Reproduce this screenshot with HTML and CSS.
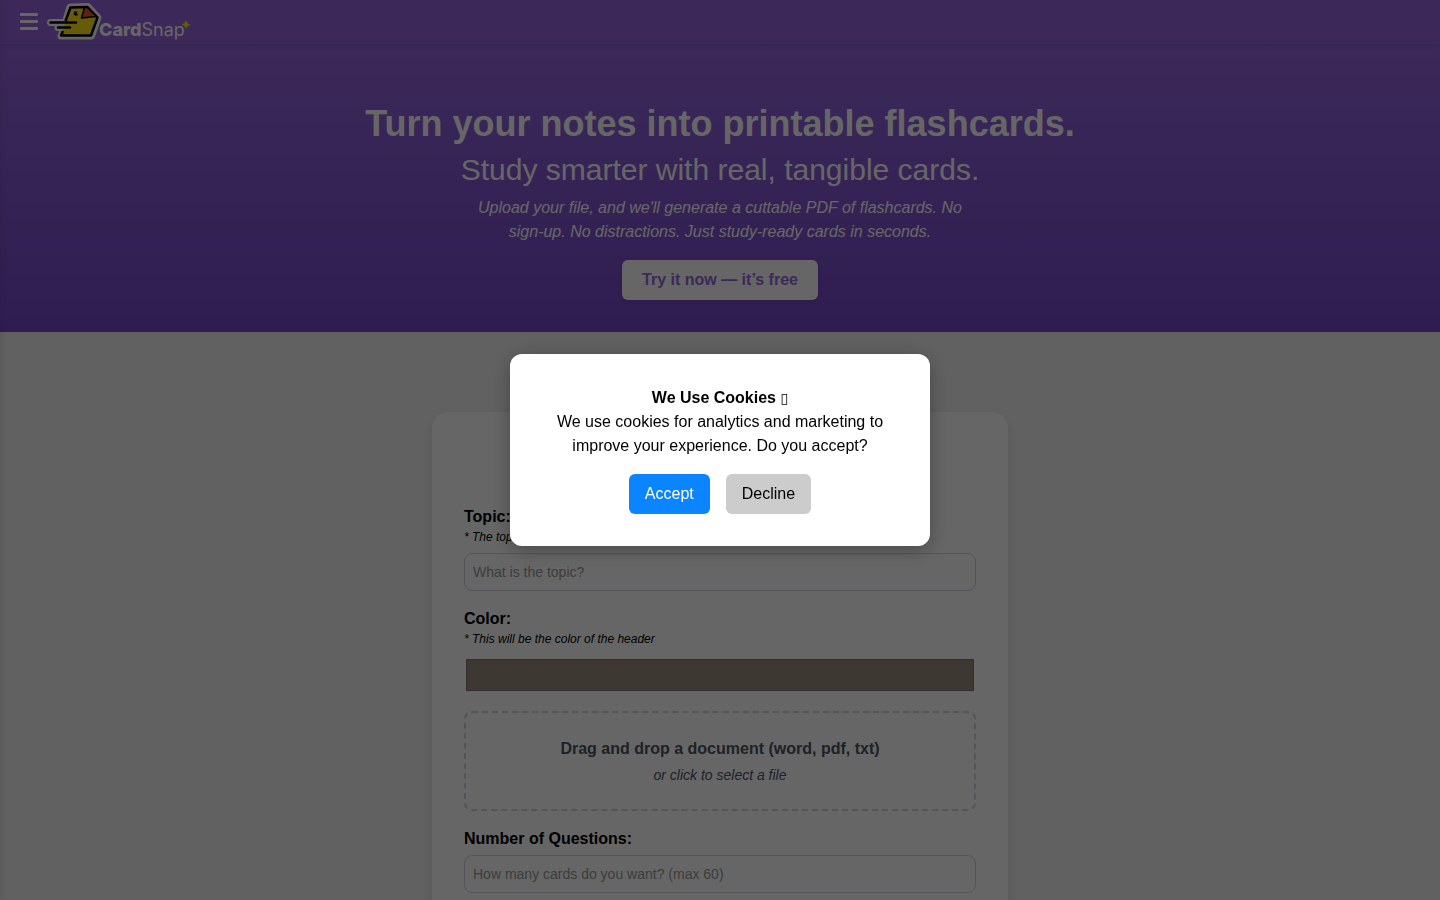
FILE: index.html
```html
<!DOCTYPE html>
<html lang="en">
<head>
	<meta charset="UTF-8">
	<meta name="viewport" content="width=device-width, initial-scale=1.0">
	<title>CardSnap</title>
	<link rel="stylesheet" href="styles.css">
</head>
<body>
	<div class="sidebar" id="sidebar"></div>

	<header class="navbar">
		<button class="menuBtn" id="menuBtn" type="button" aria-label="Menu">
			<span></span>
			<span></span>
			<span></span>
		</button>
		<a class="logo" href="#" aria-label="CardSnap">
			<svg width="150" height="42" viewBox="0 0 150 42">
				<!-- white outline -->
				<g fill="#fff" stroke="#fff" stroke-width="7" stroke-linejoin="round" stroke-linecap="round">
					<path d="M24 7 L42 6.500 L52 17.500 L45.500 36 H15 L17.500 30 L20 20 Z"/>
					<path d="M4.500 22.500 H29 M12 27.500 H22" fill="none"/>
				</g>
				<!-- bird -->
				<path d="M19.500 21 L24.500 7.500 L41.500 7 L51.500 17.500 L45 35.500 H15 L17 31" fill="#ffe414" stroke="#000" stroke-width="2.500" stroke-linejoin="round"/>
				<path d="M38.500 7.500 L35.500 18 L50.500 16.500 L41.500 7.500 Z" fill="#e8552b" stroke="#000" stroke-width="1.500" stroke-linejoin="round"/>
				<path d="M4.500 22.500 H30 M12 27.500 H24" fill="none" stroke="#000" stroke-width="2.500" stroke-linecap="round"/>
				<circle cx="30" cy="13.500" r="2.200" fill="#000"/>
				<circle cx="31.500" cy="13" r="1" fill="#ffe414"/>
				<text class="logoText" x="53" y="36"><tspan class="logoBold">Card</tspan>Snap</text>
				<path d="M140 20 Q141 23.500 144.500 24.500 Q141 25.500 140 29 Q139 25.500 135.500 24.500 Q139 23.500 140 20 Z" fill="#ffe414"/>
			</svg>
		</a>
	</header>

	<section class="hero">
		<h1>Turn your notes into printable flashcards.</h1>
		<h2>Study smarter with real, tangible cards.</h2>
		<p>Upload your file, and we'll generate a cuttable PDF of flashcards. No sign-up. No distractions. Just study-ready cards in seconds.</p>
		<a class="tryBtn" href="#cardForm">Try it now — it’s free</a>
	</section>

	<main class="content">
		<form class="card" id="cardForm">
			<div class="field">
				<label for="topic">Topic:</label>
				<small>* The topic of the flashcards</small>
				<input type="text" id="topic" placeholder="What is the topic?">
			</div>
			<div class="field">
				<label for="color">Color:</label>
				<small>* This will be the color of the header</small>
				<input type="color" id="color" value="#998c7a">
			</div>
			<label class="dropZone" for="file">
				<strong>Drag and drop a document (word, pdf, txt)</strong>
				<em>or click to select a file</em>
				<input type="file" id="file" accept=".docx,.pdf,.txt">
			</label>
			<div class="field amount">
				<label for="amount">Number of Questions:</label>
				<input type="number" id="amount" max="60" placeholder="How many cards do you want? (max 60)">
			</div>
		</form>
	</main>

	<div class="overlay" id="cookieOverlay">
		<div class="cookieBox" role="dialog" aria-labelledby="cookieTitle">
			<p id="cookieTitle"><strong>We Use Cookies</strong> <span class="cookieIcon">▯</span></p>
			<p>We use cookies for analytics and marketing to improve your experience. Do you accept?</p>
			<div class="cookieBtns">
				<button class="accept" type="button">Accept</button>
				<button class="decline" type="button">Decline</button>
			</div>
		</div>
	</div>
</body>
</html>
```
FILE: styles.css
```css
*{
	margin: 0;
	padding: 0;
	box-sizing: border-box;
}
html{
	height: 100%;
	overflow: hidden;
}
body{
	height: 100%;
	overflow: hidden;
	font-family: "Liberation Sans", Arial, sans-serif;
	font-size: 16px;
	line-height: 24px;
	color: #000;
	background-color: #f3f3f3;
}
input, button{
	font-family: inherit;
}
.sidebar{
	position: fixed;
	top: 0;
	bottom: 0;
	left: -250px;
	width: 250px;
	box-shadow: 2px 0 8px rgba(0,0,0,0.1);
	z-index: 5;
}
/* navbar */
.navbar{
	position: relative;
	display: flex;
	align-items: center;
	gap: 8px;
	padding: 0 20px 2px;
	background-color: #9667e0;
	box-shadow: 0 2px 4px rgba(0,0,0,0.1);
}
.menuBtn{
	display: flex;
	flex-direction: column;
	gap: 4px;
	width: 18px;
	border: none;
	background: none;
	cursor: pointer;
}
.menuBtn span{
	height: 3px;
	border-radius: 1px;
	background-color: #fff;
}
.logo{
	display: flex;
}
.logoText{
	font-family: Inter, sans-serif;
	font-size: 18px;
	fill: #fff;
}
.logoBold{
	font-weight: 800;
}
/* hero */
.hero{
	display: flex;
	flex-direction: column;
	align-items: center;
	padding: 56px 16px 32px;
	color: #fff;
	text-align: center;
	background: linear-gradient(#9667e0, #7649cb);
}
.hero h1{
	font-size: 36px;
	line-height: 48px;
}
.hero h2{
	font-size: 30px;
	font-weight: normal;
	line-height: 44px;
}
.hero p{
	max-width: 512px;
	margin: 4px 0 16px;
	font-style: italic;
}
.tryBtn{
	padding: 8px 20px;
	border-radius: 6px;
	color: #9667e0;
	font-weight: bold;
	text-decoration: none;
	background-color: #fff;
	box-shadow: 0 2px 4px rgba(0,0,0,0.1);
}
/* form */
.content{
	padding: 80px 16px;
}
.card{
	display: flex;
	flex-direction: column;
	gap: 16px;
	max-width: 576px;
	margin: 0 auto;
	padding: 93px 32px 32px;
	border-radius: 16px;
	background-color: #fff;
	box-shadow: 0 4px 12px rgba(0,0,0,0.1);
}
.field{
	display: flex;
	flex-direction: column;
}
.field label{
	font-weight: bold;
}
.field small{
	margin-bottom: 8px;
	font-size: 12px;
	font-style: italic;
	line-height: 16px;
}
.field input{
	width: 100%;
	height: 38px;
	padding: 0 8px;
	border: 1px solid #d1d5db;
	border-radius: 8px;
	font-size: 14px;
	background-color: #fff;
}
.field input::placeholder{
	color: #999;
}
.field input[type="color"]{
	height: 40px;
	padding: 0;
	border: none;
	background: none;
}
.amount{
	gap: 4px;
}
.dropZone{
	display: flex;
	flex-direction: column;
	gap: 4px;
	padding: 24px;
	border: 2px dashed #d1d5db;
	border-radius: 8px;
	color: #4b5563;
	text-align: center;
	cursor: pointer;
}
.dropZone em{
	font-size: 14px;
	line-height: 20px;
}
.dropZone input{
	display: none;
}
/* cookies */
.overlay{
	position: fixed;
	top: 0;
	right: 0;
	bottom: 0;
	left: 0;
	display: flex;
	align-items: center;
	justify-content: center;
	background-color: rgba(0,0,0,0.6);
	z-index: 10;
}
.cookieBox{
	width: 90%;
	max-width: 420px;
	padding: 32px;
	border-radius: 12px;
	text-align: center;
	background-color: #fff;
	box-shadow: 0 4px 20px rgba(0,0,0,0.3);
}
.cookieIcon{
	font-family: "DejaVu Sans", sans-serif;
	font-size: 14px;
	line-height: 16px;
}
.cookieBtns{
	display: flex;
	justify-content: center;
	gap: 16px;
	margin-top: 16px;
}
.cookieBtns button{
	padding: 8px 16px;
	border: none;
	border-radius: 6px;
	font-size: 16px;
	line-height: 24px;
	cursor: pointer;
}
.accept{
	color: #fff;
	background-color: #0a84ff;
}
.decline{
	color: #000;
	background-color: #ccc;
}
```
